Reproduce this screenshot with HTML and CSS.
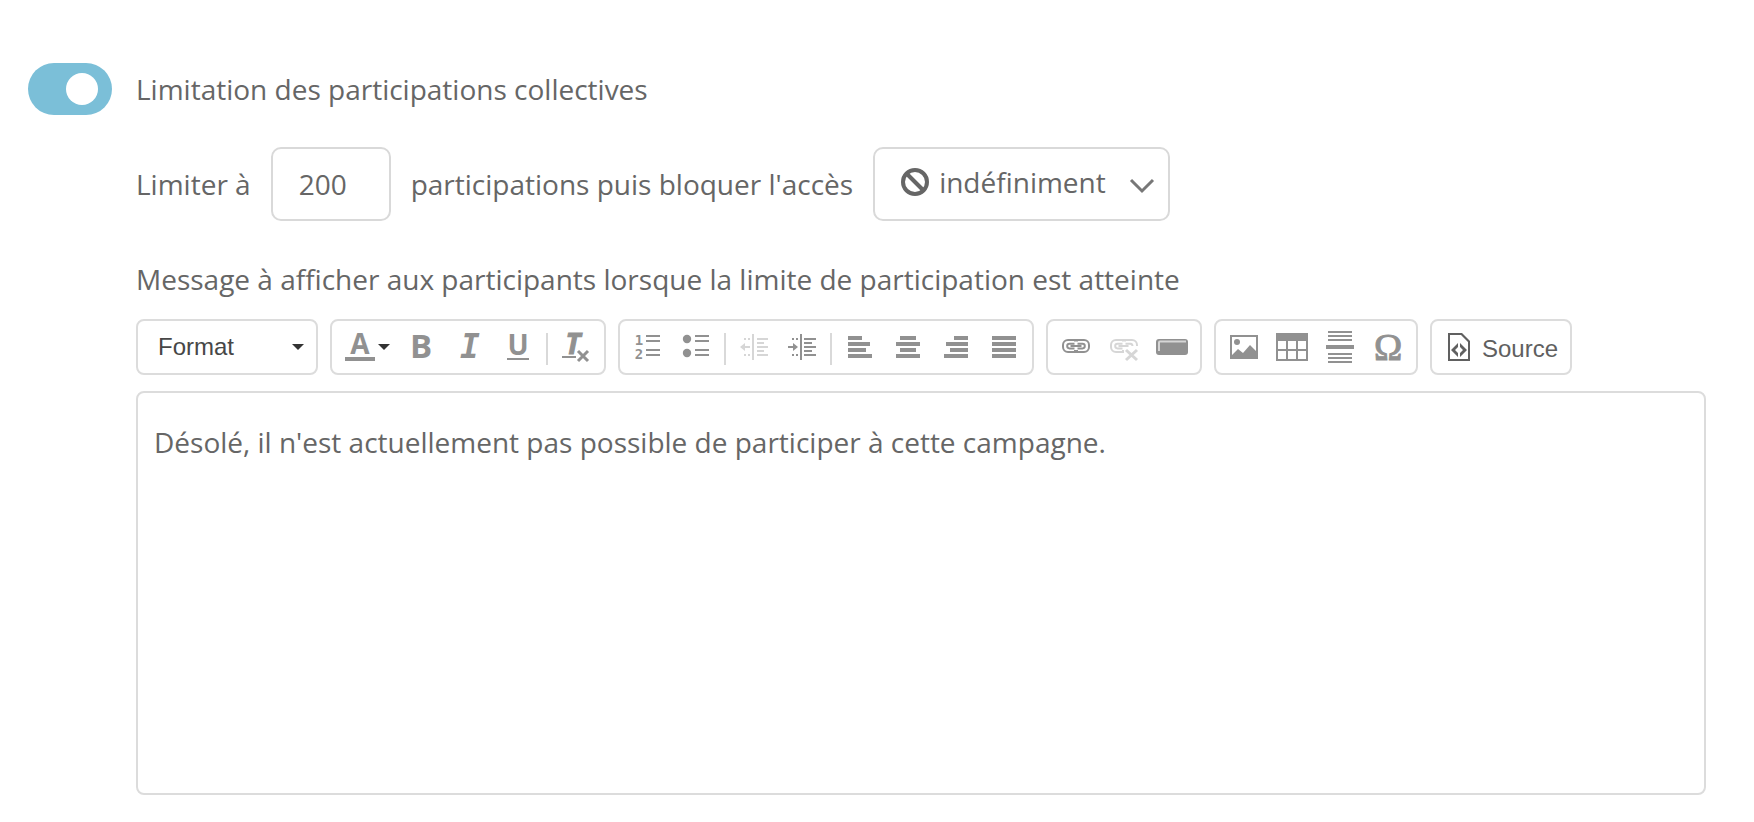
FILE: index.html
```
<!DOCTYPE html>
<html lang="fr">
  <head>
    <meta charset="utf-8" />
    <title>Limitation des participations</title>
    <meta name="viewport" content="width=device-width, initial-scale=1.0" />
    <link rel="stylesheet" href="styles.css">
  </head>
  <body>
    <form class="settings">
      <div class="setting-head">
        <input type="checkbox" class="switch" id="limitSwitch" checked />
        <label for="limitSwitch">Limitation des participations collectives</label>
      </div>

      <div class="setting-body">
        <div class="limit-row">
          <label for="limitCount">Limiter à</label>
          <input type="text" class="count" id="limitCount" value="200" />
          <label for="limitDuration">participations puis bloquer l'accès</label>
          <div class="duration">
            <svg class="ban" viewBox="0 0 28 28"><circle cx="14" cy="14" r="12" /><path d="M5.5 5.5l17 17" /></svg>
            <select id="limitDuration">
              <option>indéfiniment</option>
            </select>
            <svg class="chevron" viewBox="0 0 26 16"><path d="M2 2l11 11L24 2" /></svg>
          </div>
        </div>

        <label class="message-label" for="message">Message à afficher aux participants lorsque la limite de participation est atteinte</label>

        <div class="toolbar">
          <div class="group format">
            <select aria-label="Format">
              <option>Format</option>
            </select>
            <svg class="caret" viewBox="0 0 12 6"><path d="M0 0h12L6 6z" /></svg>
          </div>

          <div class="group">
            <button type="button" class="tool color" aria-label="Couleur du texte">
              <svg class="icon" viewBox="0 0 32 32"><text x="16" y="23" class="letter small">A</text><path d="M1 26h30v4H1z" /></svg>
              <svg class="caret" viewBox="0 0 12 6"><path d="M0 0h12L6 6z" /></svg>
            </button>
            <button type="button" class="tool" aria-label="Gras">
              <svg class="icon" viewBox="0 0 32 32"><text x="15" y="27" class="letter">B</text></svg>
            </button>
            <button type="button" class="tool" aria-label="Italique">
              <svg class="icon" viewBox="0 0 32 32"><text x="16" y="27" class="letter slab">I</text></svg>
            </button>
            <button type="button" class="tool" aria-label="Souligné">
              <svg class="icon" viewBox="0 0 32 32"><text x="16" y="24" class="letter small">U</text><path d="M5 27h22v2H5z" /></svg>
            </button>
            <span class="separator"></span>
            <button type="button" class="tool" aria-label="Supprimer la mise en forme">
              <svg class="icon" viewBox="0 0 32 32"><text x="13" y="23" class="letter small slanted">T</text><path d="M2 25h14v2H2z" /><path class="line bold" d="M18 20l10 10M28 20L18 30" /></svg>
            </button>
          </div>

          <div class="group">
            <button type="button" class="tool" aria-label="Liste numérotée">
              <svg class="icon" viewBox="0 0 32 32"><text x="7" y="14" class="digit">1</text><text x="7" y="28" class="digit">2</text><path d="M14 4h14v2H14zM14 9h14v2H14zM14 18h14v2H14zM14 23h14v2H14z" /></svg>
            </button>
            <button type="button" class="tool" aria-label="Liste à puces">
              <svg class="icon" viewBox="0 0 32 32"><circle cx="7" cy="8" r="4.2" /><circle cx="7" cy="22" r="4.2" /><path d="M15 4h14v2H15zM15 9h14v2H15zM15 18h14v2H15zM15 23h14v2H15z" /></svg>
            </button>
            <span class="separator"></span>
            <button type="button" class="tool" aria-label="Diminuer le retrait" disabled>
              <svg class="icon" viewBox="0 0 32 32"><path d="M14 3h2v26h-2zM19 7h11v2H19zM19 11h7v2h-7zM19 15h11v2H19zM19 19h7v2h-7zM19 23h11v2H19zM6 7h2v2H6zM10 7h2v2h-2zM6 23h2v2H6zM10 23h2v2h-2zM2 16l5-4v3h5v2H7v3z" /></svg>
            </button>
            <button type="button" class="tool" aria-label="Augmenter le retrait">
              <svg class="icon" viewBox="0 0 32 32"><path d="M14 3h2v26h-2zM18 7h12v2H18zM18 11h8v2h-8zM18 15h12v2H18zM18 19h8v2h-8zM18 23h12v2H18zM6 7h2v2H6zM10 7h2v2h-2zM6 23h2v2H6zM10 23h2v2h-2zM12 16l-5-4v3H2v2h5v3z" /></svg>
            </button>
            <span class="separator"></span>
            <button type="button" class="tool" aria-label="Aligner à gauche">
              <svg class="icon" viewBox="0 0 32 32"><path d="M4 5h14v4H4zM4 11h22v4H4zM4 17h18v4H4zM4 23h24v4H4z" /></svg>
            </button>
            <button type="button" class="tool" aria-label="Centrer">
              <svg class="icon" viewBox="0 0 32 32"><path d="M8 5h16v4H8zM4 11h24v4H4zM8 17h16v4H8zM4 23h24v4H4z" /></svg>
            </button>
            <button type="button" class="tool" aria-label="Aligner à droite">
              <svg class="icon" viewBox="0 0 32 32"><path d="M14 5h14v4H14zM6 11h22v4H6zM10 17h18v4H10zM4 23h24v4H4z" /></svg>
            </button>
            <button type="button" class="tool" aria-label="Justifier">
              <svg class="icon" viewBox="0 0 32 32"><path d="M4 5h24v4H4zM4 11h24v4H4zM4 17h24v4H4zM4 23h24v4H4z" /></svg>
            </button>
          </div>

          <div class="group">
            <button type="button" class="tool" aria-label="Lien">
              <svg class="icon" viewBox="0 0 32 32"><path class="line" d="M15 10.500V9H8a5 5 0 0 0-5 5v2a5 5 0 0 0 5 5h7v-2M17 10.500V9h7a5 5 0 0 1 5 5v2a5 5 0 0 1-5 5h-7v-2" /><path class="line" d="M14.500 12.800H9.500a2.300 2.300 0 0 0 0 4.600h5M17.500 12.800h5a2.300 2.300 0 0 1 0 4.600h-5M10.500 15.100h11" /></svg>
            </button>
            <button type="button" class="tool" aria-label="Supprimer le lien" disabled>
              <svg class="icon" viewBox="0 0 32 32"><path class="line" d="M15 10.500V9H8a5 5 0 0 0-5 5v2a5 5 0 0 0 5 5h7v-2M17 10.500V9h7a5 5 0 0 1 5 5v1" /><path class="line" d="M14.500 12.800H9.500a2.300 2.300 0 0 0 0 4.600h5M17.500 12.800h5a2.300 2.300 0 0 1 2 2.300M10.500 15.100h10" /><path class="line bold" d="M18 19l11 10M29 19l-11 10" /></svg>
            </button>
            <button type="button" class="tool" aria-label="Bouton">
              <svg class="icon" viewBox="0 0 32 32"><rect x="0" y="8" width="32" height="16" rx="3" /><path class="shine" d="M3 20v-8.500a1 1 0 0 1 1-1h26" /></svg>
            </button>
          </div>

          <div class="group">
            <button type="button" class="tool" aria-label="Image">
              <svg class="icon" viewBox="0 0 32 32"><path fill-rule="evenodd" d="M2 4h28v24H2zM4 6v18l6-6 5 4 7-8 6 6V6z" /><circle cx="9" cy="11" r="3" /></svg>
            </button>
            <button type="button" class="tool" aria-label="Tableau">
              <svg class="icon" viewBox="0 0 32 32"><path fill-rule="evenodd" d="M0 2h32v28H0zM2 10v8h8v-8zM12 10v8h8v-8zM22 10v8h8v-8zM2 20v8h8v-8zM12 20v8h8v-8zM22 20v8h8v-8z" /></svg>
            </button>
            <button type="button" class="tool" aria-label="Ligne horizontale">
              <svg class="icon" viewBox="0 0 32 32"><path d="M4 0h24v2H4zM4 4h24v2H4zM4 8h24v2H4zM2 14h28v4H2zM4 22h24v2H4zM4 26h24v2H4zM4 30h24v2H4z" /></svg>
            </button>
            <button type="button" class="tool" aria-label="Caractère spécial">
              <svg class="icon" viewBox="0 0 32 32"><text x="16" y="29" class="omega">Ω</text></svg>
            </button>
          </div>

          <div class="group">
            <button type="button" class="source">
              <svg class="icon" viewBox="0 0 32 32"><path fill-rule="evenodd" d="M5 2h14l8 8v20H5zM7 4v24h18V11l-7-7z" /><path d="M15 12v4l-3 3 3 3v4l-7-7zM17 12v4l3 3-3 3v4l7-7z" /></svg>
              <span class="source-label">Source</span>
            </button>
          </div>
        </div>

        <textarea class="editor" id="message">Désolé, il n'est actuellement pas possible de participer à cette campagne.</textarea>
      </div>
    </form>
  </body>
</html>
```
FILE: styles.css
```
* {
  box-sizing: border-box;
}
body {
  margin: 0;
  background: #fff;
  color: #666;
  font-family: "Open Sans", Arial, sans-serif;
  font-size: 28px;
  line-height: 38px;
}
input,
select,
textarea,
button {
  margin: 0;
  color: inherit;
  font: inherit;
}
.settings {
  padding: 63px 48px 24px 28px;
}
.setting-head {
  display: flex;
  align-items: center;
  gap: 24px;
}
.switch {
  appearance: none;
  display: flex;
  align-items: center;
  justify-content: flex-end;
  width: 84px;
  height: 52px;
  padding: 0 14px;
  border-radius: 26px;
  background: #ccc;
  cursor: pointer;
}
.switch::before {
  content: "";
  width: 32px;
  height: 32px;
  border-radius: 50%;
  background: #fff;
}
.switch:checked {
  background: #7bbfd8;
}
.setting-body {
  display: flex;
  flex-direction: column;
  margin-left: 108px;
}

/* Limit */
.limit-row {
  display: flex;
  flex-wrap: wrap;
  align-items: center;
  gap: 20px;
  margin-top: 32px;
}
.count,
.duration {
  height: 74px;
  border: 2px solid #d9d9d9;
  border-radius: 10px;
  background: #fff;
}
.count {
  width: 120px;
  padding: 0 26px;
}
.duration {
  display: flex;
  align-items: center;
  padding: 0 13px 4px 26px;
}
.duration select {
  appearance: none;
  width: 200px;
  padding: 0 0 0 10px;
  border: none;
  background: none;
}
.ban {
  width: 28px;
  height: 28px;
  fill: none;
  stroke: #666;
  stroke-width: 4;
}
.chevron {
  width: 26px;
  height: 16px;
  margin-top: 8px;
  fill: none;
  stroke: #777;
  stroke-width: 3;
}
.message-label {
  margin-top: 39px;
}

/* Toolbar */
.toolbar {
  display: flex;
  flex-wrap: wrap;
  gap: 12px;
  margin: 21px 0 16px;
  font-family: "Liberation Sans", Arial, sans-serif;
  font-size: 24px;
  line-height: 28px;
}
.group {
  display: flex;
  align-items: center;
  height: 56px;
  padding: 0 4px;
  border: 2px solid #dcdcdc;
  border-radius: 8px;
}
.format {
  padding: 0 12px 0 20px;
  color: #474747;
}
.format select {
  appearance: none;
  width: 134px;
  padding: 0;
  border: none;
  background: none;
}
.caret {
  width: 12px;
  height: 6px;
  fill: #333;
}
.tool,
.source {
  display: flex;
  align-items: center;
  justify-content: center;
  height: 48px;
  padding: 0;
  border: none;
  background: none;
  cursor: pointer;
}
.tool {
  width: 48px;
  color: #919191;
}
.tool:disabled {
  color: #d6d6d6;
  cursor: default;
}
.color {
  width: 62px;
  gap: 2px;
}
.source {
  gap: 7px;
  padding: 0 8px 0 7px;
  color: #606060;
}
.source-label {
  padding-top: 3px;
}
.icon {
  width: 32px;
  height: 32px;
  flex: none;
  overflow: visible;
  fill: currentColor;
}
.line {
  fill: none;
  stroke: currentColor;
  stroke-width: 2;
}
.line.bold {
  stroke-width: 3;
}
.shine {
  fill: none;
  stroke: #d6d6d6;
  stroke-width: 2;
}
.letter {
  font: bold 33px "Open Sans", sans-serif;
  text-anchor: middle;
}
.letter.small {
  font-size: 28px;
}
.letter.slanted {
  font-style: italic;
  stroke: currentColor;
  stroke-width: 1;
}
.letter.slab {
  font-family: "DejaVu Sans Mono", monospace;
  font-style: italic;
}
.digit {
  font: bold 14px "DejaVu Sans Mono", monospace;
  text-anchor: middle;
}
.omega {
  font: 38px "Liberation Serif", serif;
  stroke: currentColor;
  stroke-width: 1;
  text-anchor: middle;
}
.separator {
  width: 2px;
  height: 32px;
  margin: 4px 4px 0;
  background: #d9d9d9;
}

/* Message */
.editor {
  width: 100%;
  height: 404px;
  padding: 30px 16px;
  border: 2px solid #dcdcdc;
  border-radius: 8px;
  resize: none;
}
```
